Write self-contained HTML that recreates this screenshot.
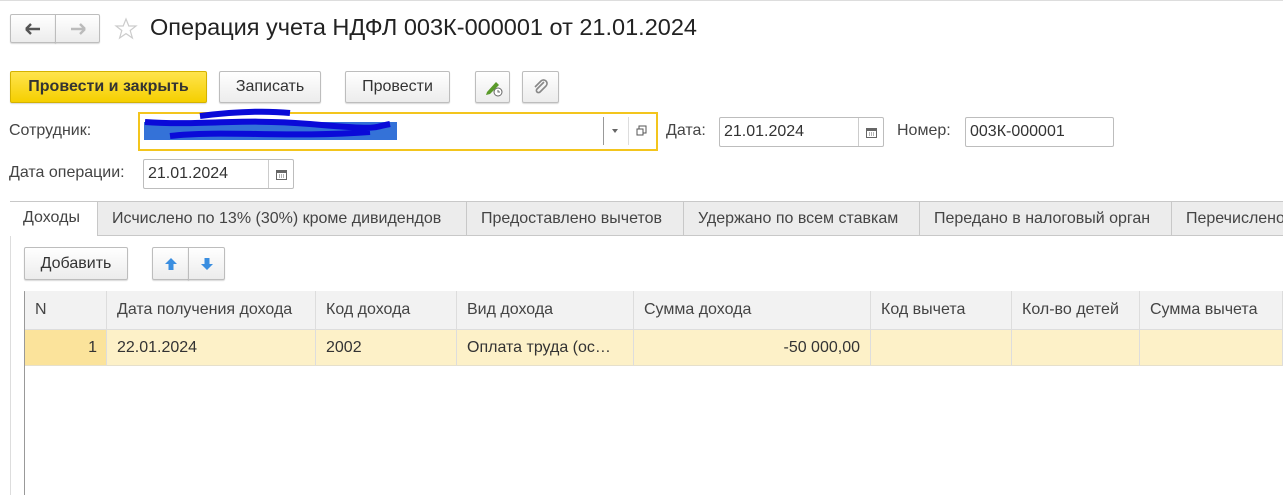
<!DOCTYPE html>
<html><head><meta charset="utf-8"><style>
*{box-sizing:border-box;margin:0;padding:0}
body{width:1283px;height:495px;background:#fff;position:relative;overflow:hidden;font-family:"Liberation Sans",Arial,sans-serif;font-size:16px;color:#333}
.a{position:absolute}
.btn{position:absolute;border:1px solid #bdbdbd;border-radius:2px;background:linear-gradient(#fff,#ececec);box-shadow:0 1px 1px rgba(0,0,0,.15);display:flex;align-items:center;justify-content:center;color:#333}
.fld{position:absolute;border:1px solid #bdbdbd;border-radius:2px;background:#fff;padding-left:4px;display:flex;align-items:center;color:#333}
.cal{position:absolute;right:0;top:0;bottom:0;width:25px;border-left:1px solid #ccc;display:flex;align-items:center;justify-content:center}
.tab{position:absolute;top:201px;height:35px;background:#ececec;border:1px solid #c8c8c8;border-left:none;display:flex;align-items:center;padding-left:14px;color:#444}
.th,.td{position:absolute;display:flex;align-items:center;padding-left:10px;border-right:1px solid #ddd}
.th{top:291px;height:39px;background:#f2f2f2;border-bottom:1px solid #ddd;color:#444}
.td{top:330px;height:36px;background:#fdf1c8;border-bottom:1px solid #e6e0cc}
</style></head><body>
<div class="a" style="left:0;top:0;width:1283px;height:2px;border-top:1px solid #ddd"></div>
<div class="btn" style="left:10px;top:14px;width:46px;height:29px;border-radius:2px 0 0 2px"><svg width="16" height="12"><path d="M1 6H15M1 6L6 1M1 6L6 11" stroke="#555" stroke-width="2.4" fill="none"/></svg></div>
<div class="btn" style="left:55px;top:14px;width:45px;height:29px;border-radius:0 2px 2px 0"><svg width="16" height="12"><path d="M1 6H15M15 6L10 1M15 6L10 11" stroke="#bbb" stroke-width="2.4" fill="none"/></svg></div>
<svg class="a" style="left:114px;top:17px" width="24" height="24"><path d="M12 2L14.8 9H22L16.2 13.5L18.4 21L12 16.6L5.6 21L7.8 13.5L2 9H9.2Z" fill="none" stroke="#ccc" stroke-width="1.2"/></svg>
<div class="a" style="left:150px;top:14px;font-size:23.5px;color:#222">Операция учета НДФЛ 003К-000001 от 21.01.2024</div>

<div class="btn" style="left:10px;top:71px;width:197px;height:32px;background:linear-gradient(#ffe44d,#f5cf00);border-color:#d4b200;font-weight:bold;color:#333;font-size:16px">Провести и закрыть</div>
<div class="btn" style="left:219px;top:71px;width:102px;height:32px">Записать</div>
<div class="btn" style="left:345px;top:71px;width:105px;height:32px">Провести</div>
<div class="btn" style="left:475px;top:71px;width:35px;height:32px"><svg width="20" height="20"><path d="M4 15L13 5L16 8L7 17L3 18Z" fill="#5a9a2a"/><circle cx="15" cy="15" r="4" fill="#fff" stroke="#666"/><path d="M15 13V15H17" stroke="#666" fill="none"/></svg></div>
<div class="btn" style="left:522px;top:71px;width:37px;height:32px"><svg width="18" height="18"><path d="M12 4L5 11A2 2 0 0 0 8 14L14 8A3.5 3.5 0 0 0 9 3L3 9" stroke="#888" stroke-width="1.6" fill="none"/></svg></div>

<div class="a" style="left:9px;top:122px;color:#444">Сотрудник:</div>
<div class="a" style="left:138px;top:112px;width:520px;height:39px;border:2px solid #f3c51d;background:#fff"></div>
<div class="a" style="left:144px;top:122px;width:253px;height:18px;background:#3472d8"></div>
<svg class="a" style="left:140px;top:108px" width="280" height="40"><path d="M5 14C60 18 100 10 170 16S230 20 250 16M30 28C80 22 150 30 230 24M60 8C100 3 130 3 150 5" stroke="#0a0ad8" stroke-width="6" fill="none"/></svg>
<div class="a" style="left:603px;top:117px;width:1px;height:28px;background:#999"></div>
<div class="a" style="left:612px;top:129px;border:3px solid transparent;border-top:4px solid #666"></div>
<div class="a" style="left:628px;top:117px;width:1px;height:28px;background:#ddd"></div>
<svg class="a" style="left:636px;top:125px" width="12" height="12"><rect x="3" y="1" width="7" height="7" fill="none" stroke="#555"/><rect x="1" y="4" width="6" height="6" fill="#fff" stroke="#555"/></svg>

<div class="a" style="left:666px;top:122px;color:#444">Дата:</div>
<div class="fld" style="left:719px;top:117px;width:165px;height:30px">21.01.2024<div class="cal"><svg width="11" height="11"><rect x="0.5" y="1.5" width="10" height="9" fill="none" stroke="#666"/><rect x="0.5" y="1.5" width="10" height="2.5" fill="#666"/><path d="M3 6h1M5 6h1M7 6h1M3 8h1M5 8h1M7 8h1" stroke="#666"/></svg></div></div>
<div class="a" style="left:897px;top:122px;color:#444">Номер:</div>
<div class="fld" style="left:965px;top:117px;width:149px;height:30px">003К-000001</div>

<div class="a" style="left:9px;top:164px;color:#444">Дата операции:</div>
<div class="fld" style="left:143px;top:159px;width:151px;height:30px">21.01.2024<div class="cal"><svg width="11" height="11"><rect x="0.5" y="1.5" width="10" height="9" fill="none" stroke="#666"/><rect x="0.5" y="1.5" width="10" height="2.5" fill="#666"/><path d="M3 6h1M5 6h1M7 6h1M3 8h1M5 8h1M7 8h1" stroke="#666"/></svg></div></div>

<div class="a" style="left:10px;top:235px;width:1273px;height:1px;background:#c8c8c8"></div>
<div class="a" style="left:10px;top:201px;width:1px;height:294px;background:#ddd"></div>
<div class="a" style="left:10px;top:201px;width:87px;height:35px;background:#fff;border-top:1px solid #c8c8c8;padding:7px 0 0 13px;color:#444">Доходы</div>
<div class="tab" style="left:97px;width:370px;border-left:1px solid #c8c8c8">Исчислено по 13% (30%) кроме дивидендов</div>
<div class="tab" style="left:467px;width:217px">Предоставлено вычетов</div>
<div class="tab" style="left:684px;width:236px">Удержано по всем ставкам</div>
<div class="tab" style="left:920px;width:252px">Передано в налоговый орган</div>
<div class="tab" style="left:1172px;width:120px;white-space:nowrap;overflow:hidden">Перечислено</div>

<div class="btn" style="left:24px;top:247px;width:104px;height:33px">Добавить</div>
<div class="btn" style="left:152px;top:247px;width:37px;height:33px;border-radius:2px 0 0 2px"><svg width="14" height="14"><path d="M7 1L13 7H9.5V13H4.5V7H1Z" fill="#3a8ee0"/></svg></div>
<div class="btn" style="left:188px;top:247px;width:37px;height:33px;border-radius:0 2px 2px 0"><svg width="14" height="14"><path d="M7 13L13 7H9.5V1H4.5V7H1Z" fill="#3a8ee0"/></svg></div>

<div class="a" style="left:24px;top:291px;width:1259px;height:204px;border-left:1px solid #999;border-top:1px solid #aaa"></div>
<div class="th" style="left:25px;width:82px">N</div>
<div class="th" style="left:107px;width:209px">Дата получения дохода</div>
<div class="th" style="left:316px;width:141px">Код дохода</div>
<div class="th" style="left:457px;width:177px">Вид дохода</div>
<div class="th" style="left:634px;width:237px">Сумма дохода</div>
<div class="th" style="left:871px;width:141px">Код вычета</div>
<div class="th" style="left:1012px;width:128px">Кол-во детей</div>
<div class="th" style="left:1140px;width:143px">Сумма вычета</div>
<div class="td" style="left:25px;width:82px;background:#fbe39b;justify-content:flex-end;padding-right:9px">1</div>
<div class="td" style="left:107px;width:209px">22.01.2024</div>
<div class="td" style="left:316px;width:141px">2002</div>
<div class="td" style="left:457px;width:177px">Оплата труда (ос…</div>
<div class="td" style="left:634px;width:237px;justify-content:flex-end;padding-right:10px">-50 000,00</div>
<div class="td" style="left:871px;width:141px"></div>
<div class="td" style="left:1012px;width:128px"></div>
<div class="td" style="left:1140px;width:143px"></div>
</body></html>
